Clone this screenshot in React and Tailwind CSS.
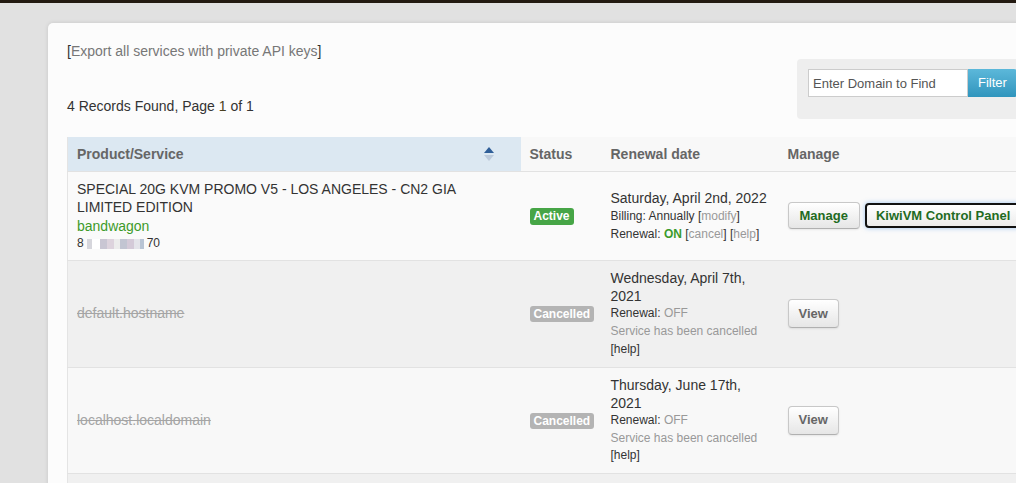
import React from "react";

const SortIcon = () => (
  <svg width="10" height="16" viewBox="0 0 10 16">
    <path d="M5 1 L10 7 L0 7 Z" fill="#2f5e98" />
    <path d="M0 9 L10 9 L5 15 Z" fill="#bccadb" />
  </svg>
);

const Blurred = () => (
  <span className="inline-flex items-center align-middle mx-[3px] gap-0">
    <span className="inline-block w-[5px] h-[10px] bg-[#d6d6dc]" />
    <span className="inline-block w-[8px] h-[10px] bg-white" />
    <span className="inline-block w-[7px] h-[10px] bg-[#c9c6d3]" />
    <span className="inline-block w-[7px] h-[10px] bg-[#ddd3dd]" />
    <span className="inline-block w-[6px] h-[10px] bg-[#ececec]" />
    <span className="inline-block w-[7px] h-[10px] bg-[#c2c5d2]" />
    <span className="inline-block w-[7px] h-[10px] bg-[#d4cad8]" />
    <span className="inline-block w-[6px] h-[10px] bg-[#e4e4ea]" />
    <span className="inline-block w-[4px] h-[10px] bg-[#b8c4d4]" />
  </span>
);

const btn =
  "rounded-[4px] border border-[#c8c8c8] border-b-[#b0b0b0] bg-gradient-to-b from-white to-[#e6e6e6] shadow-[0_1px_2px_rgba(0,0,0,0.08)] text-[13px] font-bold leading-[18px]";

const CancelledRow = ({ host, date, bg }) => (
  <tr className={`${bg} border-t border-[#e2e2e2]`}>
    <td className="px-[9px] py-[8px] align-middle">
      <span className="text-[#a5a5a5] line-through">{host}</span>
    </td>
    <td className="px-[9px] py-[8px] align-middle">
      <span className="inline-block rounded-[3px] bg-[#b4b4b4] px-[4px] text-[12px] font-bold leading-[16px] text-white">
        Cancelled
      </span>
    </td>
    <td className="pl-[10px] pr-[8px] py-[8px] align-middle">
      <div className="leading-[18px] text-[#333]">{date}</div>
      <div className="text-[12px] leading-[17.9px]">
        <div className="text-[#333]">
          Renewal: <span className="text-[#999]">OFF</span>
        </div>
        <div className="text-[#999]">Service has been cancelled</div>
        <div className="text-[#333]">[help]</div>
      </div>
    </td>
    <td className="px-[9px] py-[8px] align-middle">
      <button className={`${btn} h-[29px] px-[10px] text-[#666]`}>View</button>
    </td>
  </tr>
);

export default function App() {
  return (
    <div
      className="h-[483px] w-[1016px] overflow-hidden bg-[#e1e1e1] text-[14px] text-[#333]"
      style={{ fontFamily: '"Liberation Sans", Arial, sans-serif' }}
    >
      <div className="h-[3px] bg-[#231a11]" />
      <div className="ml-[48px] mt-[20px] w-[1030px] rounded-[5px] bg-[#fcfcfc] px-[19px] pt-[18px] pb-[20px] shadow-[0_0_4px_rgba(0,0,0,0.12)]">
        <div className="flex">
          <div>
            <div className="leading-[20px]">
              [<span className="text-[#777]">Export all services with private API keys</span>]
            </div>
            <div className="mt-[35px] leading-[20px]">
              4 Records Found, Page <span className="text-[#4a4020]">1</span> of 1
            </div>
          </div>
          <div className="ml-auto mt-[18px] flex h-[60px] w-[262px] items-start rounded-[4px] bg-[#eeeeee] pl-[11px] pt-[10px]">
            <input
              className="h-[28px] w-[160px] border border-[#cccccc] bg-white px-[4px] text-[13px] text-[#555] placeholder:text-[#555] outline-none"
              placeholder="Enter Domain to Find"
            />
            <button className="h-[28px] rounded-r-[3px] bg-gradient-to-b from-[#5cb8da] to-[#2f95bd] px-[10px] text-[13px] text-white">
              Filter
            </button>
          </div>
        </div>

        <table className="mt-[18px] w-full table-fixed border-collapse border-l border-[#e4e4e4] text-left">
          <colgroup>
            <col className="w-[453px]" />
            <col className="w-[80px]" />
            <col className="w-[178px]" />
            <col />
          </colgroup>
          <thead>
            <tr className="text-[14px] font-bold text-[#666]">
              <th className="bg-[#dce8f2] px-[9px] py-[8px] leading-[18px]">
                <div className="flex items-center justify-between pr-[18px]">
                  <span>Product/Service</span>
                  <SortIcon />
                </div>
              </th>
              <th className="bg-[#f8f8f8] px-[9px] py-[8px] leading-[18px]">Status</th>
              <th className="bg-[#f8f8f8] pl-[10px] py-[8px] leading-[18px]">Renewal date</th>
              <th className="bg-[#f8f8f8] px-[9px] py-[8px] leading-[18px]">Manage</th>
            </tr>
          </thead>
          <tbody>
            <tr className="border-t border-[#e2e2e2] bg-[#fafafa]">
              <td className="px-[9px] py-[8px] align-middle leading-[18.3px]">
                <div>SPECIAL 20G KVM PROMO V5 - LOS ANGELES - CN2 GIA LIMITED EDITION</div>
                <div className="text-[#3d9a2a]">bandwagon</div>
                <div className="text-[12px] leading-[17px]">
                  8<Blurred />70
                </div>
              </td>
              <td className="px-[9px] py-[8px] align-middle">
                <span className="inline-block rounded-[3px] bg-[#46a546] px-[4px] text-[12px] font-bold leading-[17px] text-white">
                  Active
                </span>
              </td>
              <td className="pl-[10px] pr-[8px] py-[8px] align-middle">
                <div className="leading-[18.5px]">Saturday, April 2nd, 2022</div>
                <div className="text-[12px] leading-[18px]">
                  <div>
                    Billing: Annually [<span className="text-[#999]">modify</span>]
                  </div>
                  <div>
                    Renewal: <span className="font-bold text-[#3c9a2c]">ON</span> [
                    <span className="text-[#999]">cancel</span>] [<span className="text-[#999]">help</span>]
                  </div>
                </div>
              </td>
              <td className="px-[9px] py-[8px] align-middle">
                <div className="flex items-center gap-[5px]">
                  <button className={`${btn} h-[27px] px-[11px] text-[#1f6b22]`}>Manage</button>
                  <button className="h-[25px] whitespace-nowrap rounded-[4px] border-2 border-[#111] bg-gradient-to-b from-white to-[#ececec] px-[9px] text-[13px] font-bold leading-[18px] text-[#1f6b22] shadow-[0_0_5px_rgba(80,150,230,0.55)]">
                    KiwiVM Control Panel
                  </button>
                </div>
              </td>
            </tr>
            <CancelledRow host="default.hostname" date="Wednesday, April 7th, 2021" bg="bg-[#f0f0f0]" />
            <CancelledRow host="localhost.localdomain" date="Thursday, June 17th, 2021" bg="bg-[#f8f8f8]" />
            <CancelledRow host="localhost.localdomain" date="Thursday, June 17th, 2021" bg="bg-[#f0f0f0]" />
          </tbody>
        </table>
      </div>
    </div>
  );
}
